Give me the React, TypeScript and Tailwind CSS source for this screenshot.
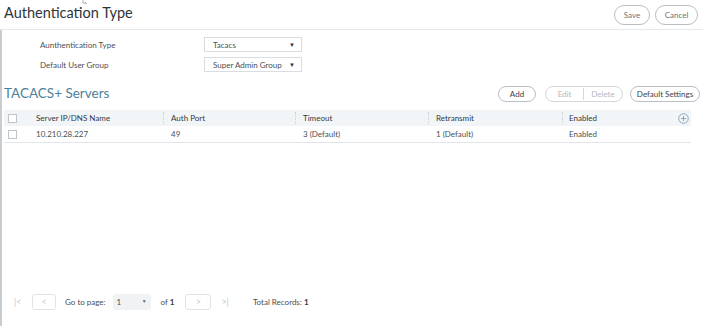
import React from "react";

const cols = "grid grid-cols-[26px_133px_132px_133px_134px_1fr]";

function Select({ value, className }: { value: string; className: string }) {
  return (
    <div
      className={`flex items-center justify-between whitespace-nowrap border border-[#d9dde1] bg-white pl-[8px] pr-[6px] text-[8px] text-[#4a4f55] ${className}`}
    >
      <span>{value}</span>
      <span className="text-[6px] text-[#333]">▼</span>
    </div>
  );
}

function Pill({ children, className }: { children: React.ReactNode; className: string }) {
  return (
    <button
      className={`flex h-[16px] items-center justify-center whitespace-nowrap rounded-full border border-[#b8bec4] bg-white text-[8px] text-[#3c4248] ${className}`}
    >
      {children}
    </button>
  );
}

export default function App() {
  return (
    <div className="h-[326px] w-[703px] overflow-hidden bg-white font-['Lato',sans-serif] text-[#4a4f55]">
      {/* header */}
      <div className="relative flex h-[30px] items-start justify-between border-b border-[#e6e9ec] pl-[4px] pr-[5px] pt-[4px]">
        <svg className="absolute left-[82px] top-0" width="6" height="5" viewBox="0 0 6 5" fill="none" stroke="#9aa0a6" strokeWidth="0.8">
          <path d="M1 0v3h3M3 2l2 2" />
        </svg>
        <h1 className="text-[14.5px] leading-[18px] text-[#2f3439]">Authentication Type</h1>
        <div className="mt-[1px] flex gap-[5px]">
          <button className="flex h-[20px] w-[36px] items-center justify-center rounded-full border border-[#b8bec4] text-[8px] text-[#6d737a]">
            Save
          </button>
          <button className="flex h-[20px] w-[43px] items-center justify-center rounded-full border border-[#b8bec4] text-[8px] text-[#6d737a]">
            Cancel
          </button>
        </div>
      </div>

      <div className="flex h-[296px] flex-col border-l-[2px] border-[#c9cdd2]">
        {/* form */}
        <div className="flex flex-col gap-[5px] pt-[7px] pl-[38px]">
          <div className="flex items-center">
            <span className="w-[164px] text-[8px] text-[#4a4f55]">Aunthentication Type</span>
            <Select value="Tacacs" className="h-[15px] w-[98px]" />
          </div>
          <div className="flex items-center">
            <span className="w-[164px] text-[8px] text-[#4a4f55]">Default User Group</span>
            <Select value="Super Admin Group" className="h-[15px] w-[98px]" />
          </div>
        </div>

        {/* servers */}
        <div className="mt-[14px] flex items-center justify-between pl-[2px] pr-[3px]">
          <h2 className="text-[13.5px] leading-none text-[#4e7f99]">TACACS+ Servers</h2>
          <div className="flex items-center">
            <Pill className="w-[38px]">Add</Pill>
            <div className="ml-[9px] flex h-[16px] items-center rounded-full border border-[#d3d7db] text-[8px] text-[#b3b8bd]">
              <span className="flex w-[38px] justify-center border-r border-[#d3d7db]">Edit</span>
              <span className="flex w-[38px] justify-center">Delete</span>
            </div>
            <Pill className="ml-[7px] w-[70px]">Default Settings</Pill>
          </div>
        </div>

        {/* table */}
        <div className="mt-[8px] ml-[2px] w-[687px] text-[8px]">
          <div className={`${cols} h-[16px] items-center bg-[#f2f5f7] text-[#33383d]`}>
            <span className="ml-[4px] h-[9px] w-[9px] border border-[#bfc4c9] bg-white" />
            <span className="pl-[6px]">Server IP/DNS Name</span>
            <span className="border-l border-dotted border-[#c9cdd2] pl-[7px]">Auth Port</span>
            <span className="border-l border-dotted border-[#c9cdd2] pl-[7px]">Timeout</span>
            <span className="border-l border-dotted border-[#c9cdd2] pl-[7px]">Retransmit</span>
            <span className="flex items-center justify-between border-l border-dotted border-[#c9cdd2] pl-[6px] pr-[2px]">
              Enabled
              <svg width="11" height="11" viewBox="0 0 12 12" fill="none" stroke="#7fa3c2" strokeWidth="1">
                <circle cx="6" cy="6" r="5.2" />
                <path d="M6 3.2v5.6M3.2 6h5.6" />
              </svg>
            </span>
          </div>
          <div className={`${cols} h-[17px] items-center border-b border-[#e3e6e9] text-[#4a4f55]`}>
            <span className="ml-[4px] h-[9px] w-[9px] border border-[#bfc4c9] bg-white" />
            <span className="pl-[6px]">10.210.28.227</span>
            <span className="pl-[8px]">49</span>
            <span className="pl-[8px]">3 (Default)</span>
            <span className="pl-[8px]">1 (Default)</span>
            <span className="pl-[7px]">Enabled</span>
          </div>
        </div>

        {/* pagination */}
        <div className="mt-auto mb-[16px] flex items-center pl-[12px] text-[8px] text-[#4a4f55]">
          <span className="w-[18px] text-[9px] text-[#c2c6ca]">|&lt;</span>
          <span className="flex h-[16px] w-[24px] items-center justify-center rounded-[3px] border border-[#e1e4e7] text-[9px] text-[#c2c6ca]">
            &lt;
          </span>
          <span className="ml-[9px]">Go to page:</span>
          <span className="ml-[7px] flex h-[16px] w-[38px] items-center justify-between rounded-[3px] bg-[#f0f2f4] px-[4px]">
            1<span className="text-[5px] text-[#666]">▼</span>
          </span>
          <span className="ml-[10px]">
            of <b className="text-[#33383d]">1</b>
          </span>
          <span className="ml-[11px] flex h-[16px] w-[26px] items-center justify-center rounded-[3px] border border-[#e1e4e7] text-[9px] text-[#c2c6ca]">
            &gt;
          </span>
          <span className="ml-[10px] text-[9px] text-[#c2c6ca]">&gt;|</span>
          <span className="ml-[24px]">
            Total Records: <b className="text-[#33383d]">1</b>
          </span>
        </div>
      </div>
    </div>
  );
}
